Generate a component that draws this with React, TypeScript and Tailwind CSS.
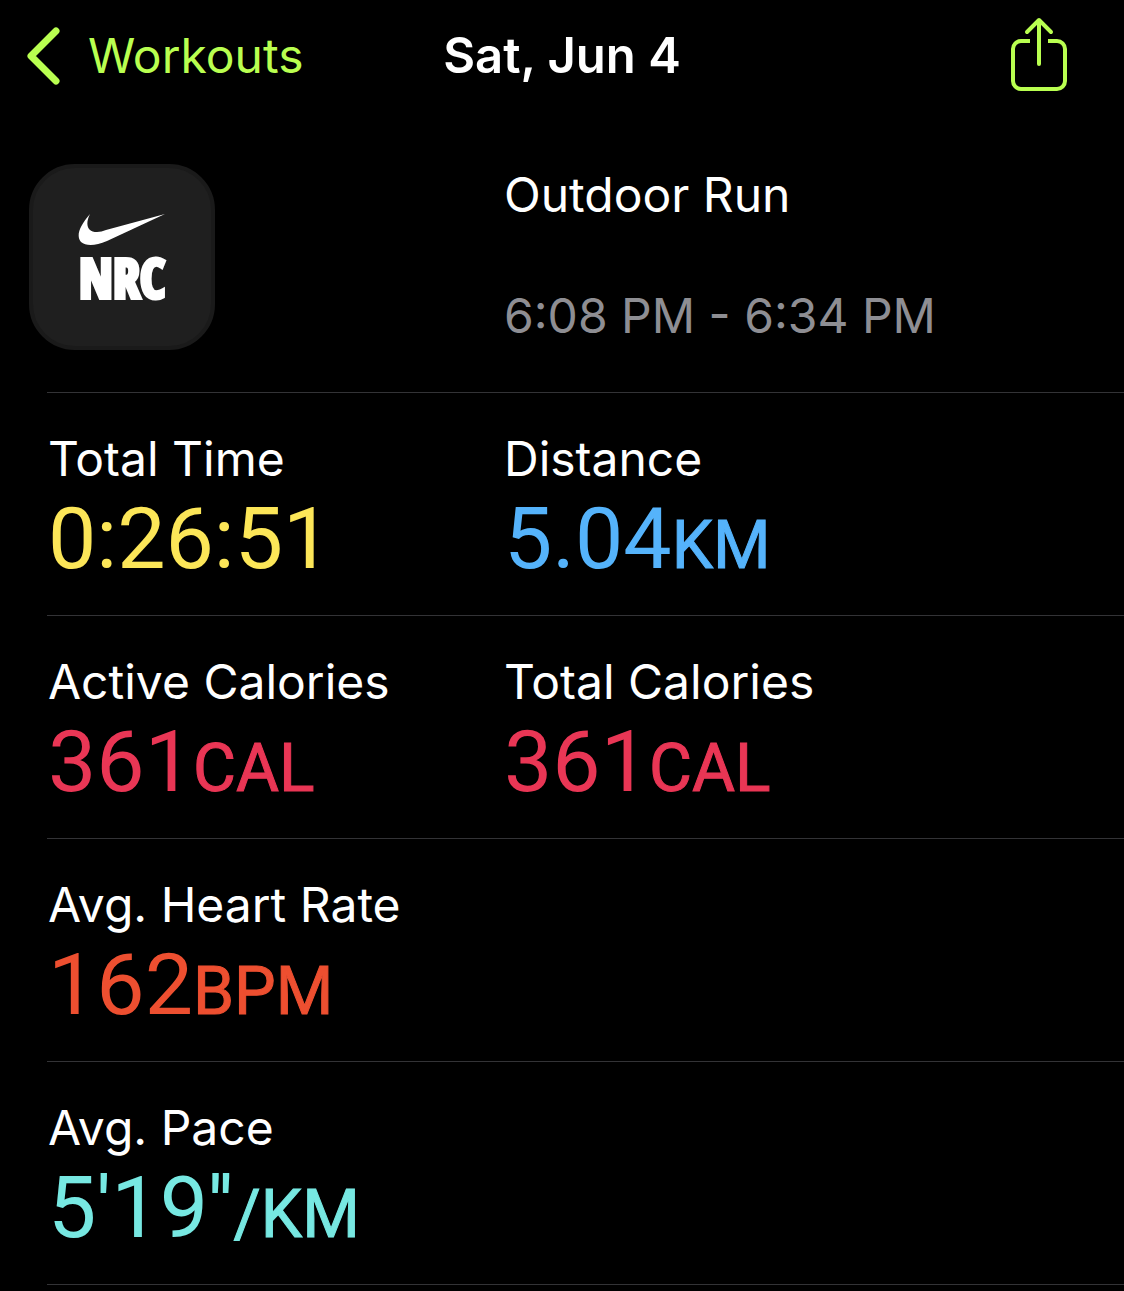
import React from "react";

type Metric = { label: string; value: string; unit: string; color: string };

const rows: Metric[][] = [
  [
    { label: "Total Time", value: "0:26:51", unit: "", color: "text-[#fce658]" },
    { label: "Distance", value: "5.04", unit: "KM", color: "text-[#55b3fb]" },
  ],
  [
    { label: "Active Calories", value: "361", unit: "CAL", color: "text-[#e93655]" },
    { label: "Total Calories", value: "361", unit: "CAL", color: "text-[#e93655]" },
  ],
  [{ label: "Avg. Heart Rate", value: "162", unit: "BPM", color: "text-[#ed4f30]" }],
  [{ label: "Avg. Pace", value: "5'19''", unit: "/KM", color: "text-[#77e8e2]" }],
];

function MetricCell({ label, value, unit, color }: Metric) {
  return (
    <div>
      <dt className="text-[48px] leading-[60px] text-white">{label}</dt>
      <dd className={`font-['Roboto',sans-serif] text-[86px] leading-[100px] whitespace-nowrap ${color}`}>
        {value}
        <span className="text-[66px] [-webkit-text-stroke:1px_currentColor]">{unit}</span>
      </dd>
    </div>
  );
}

export default function App() {
  return (
    <div className="min-h-screen overflow-hidden bg-black font-['Inter',sans-serif] text-white">
      <header className="grid h-[112px] grid-cols-[1fr_auto_1fr] items-center px-6">
        <button className="flex items-center gap-6 justify-self-start text-[48px] text-[#b9ff50]">
          <svg className="h-[60px] w-10" viewBox="0 0 40 60" fill="none" stroke="currentColor" strokeWidth="7" strokeLinecap="round" strokeLinejoin="round" aria-hidden="true">
            <path d="M32 5 7 30l25 25" />
          </svg>
          Workouts
        </button>
        <h1 className="text-[49px] font-semibold">Sat, Jun 4</h1>
        <button aria-label="Share" className="mr-8 mb-1 justify-self-end text-[#b9ff50]">
          <svg className="h-[74px] w-[58px]" viewBox="0 0 58 74" fill="none" stroke="currentColor" strokeWidth="4" aria-hidden="true">
            <path d="M20 24H11a8 8 0 0 0-8 8v32a8 8 0 0 0 8 8h36a8 8 0 0 0 8-8V32a8 8 0 0 0-8-8h-9" />
            <path d="M29 47V4M17 15 29 3l12 12" strokeLinecap="round" strokeLinejoin="round" />
          </svg>
        </button>
      </header>
      <main>
        <section className="grid grid-cols-[456px_1fr] pt-[52px] pb-[42px] pl-12">
          <div className="-ml-[19px] flex size-[186px] flex-col items-center rounded-[46px] border-4 border-[#1a1a1a] bg-[#1f1f1f] pt-[43px]">
            <svg className="h-9 w-[90px] shrink-0" viewBox="0 0 90 36" fill="white" aria-hidden="true">
              <path d="M88 3 30 30C18 35 9 35 4 31-1 25 2 16 13 3c-5 10-3 18 7 18 3 0 6-1 9-2Z" />
            </svg>
            <span className="font-['Liberation_Sans_Narrow','Open_Sans_Condensed','Roboto_Condensed','Liberation_Sans',sans-serif] text-[54px] leading-[60px] font-black [-webkit-text-stroke:4px_white]">NRC</span>
          </div>
          <div className="pt-px">
            <h2 className="text-[48px] leading-[60px]">Outdoor Run</h2>
            <p className="mt-[61px] text-[48px] leading-[60px] text-[#8e8e93]">6:08 PM - 6:34 PM</p>
          </div>
        </section>
        {rows.map((row) => (
          <dl key={row[0].label} className="ml-[47px] grid h-[223px] grid-cols-[456px_1fr] border-t border-[#333336] pt-9 pl-px">
            {row.map((m) => <MetricCell key={m.label} {...m} />)}
          </dl>
        ))}
        <div className="ml-[47px] border-t border-[#333336]" />
      </main>
    </div>
  );
}
